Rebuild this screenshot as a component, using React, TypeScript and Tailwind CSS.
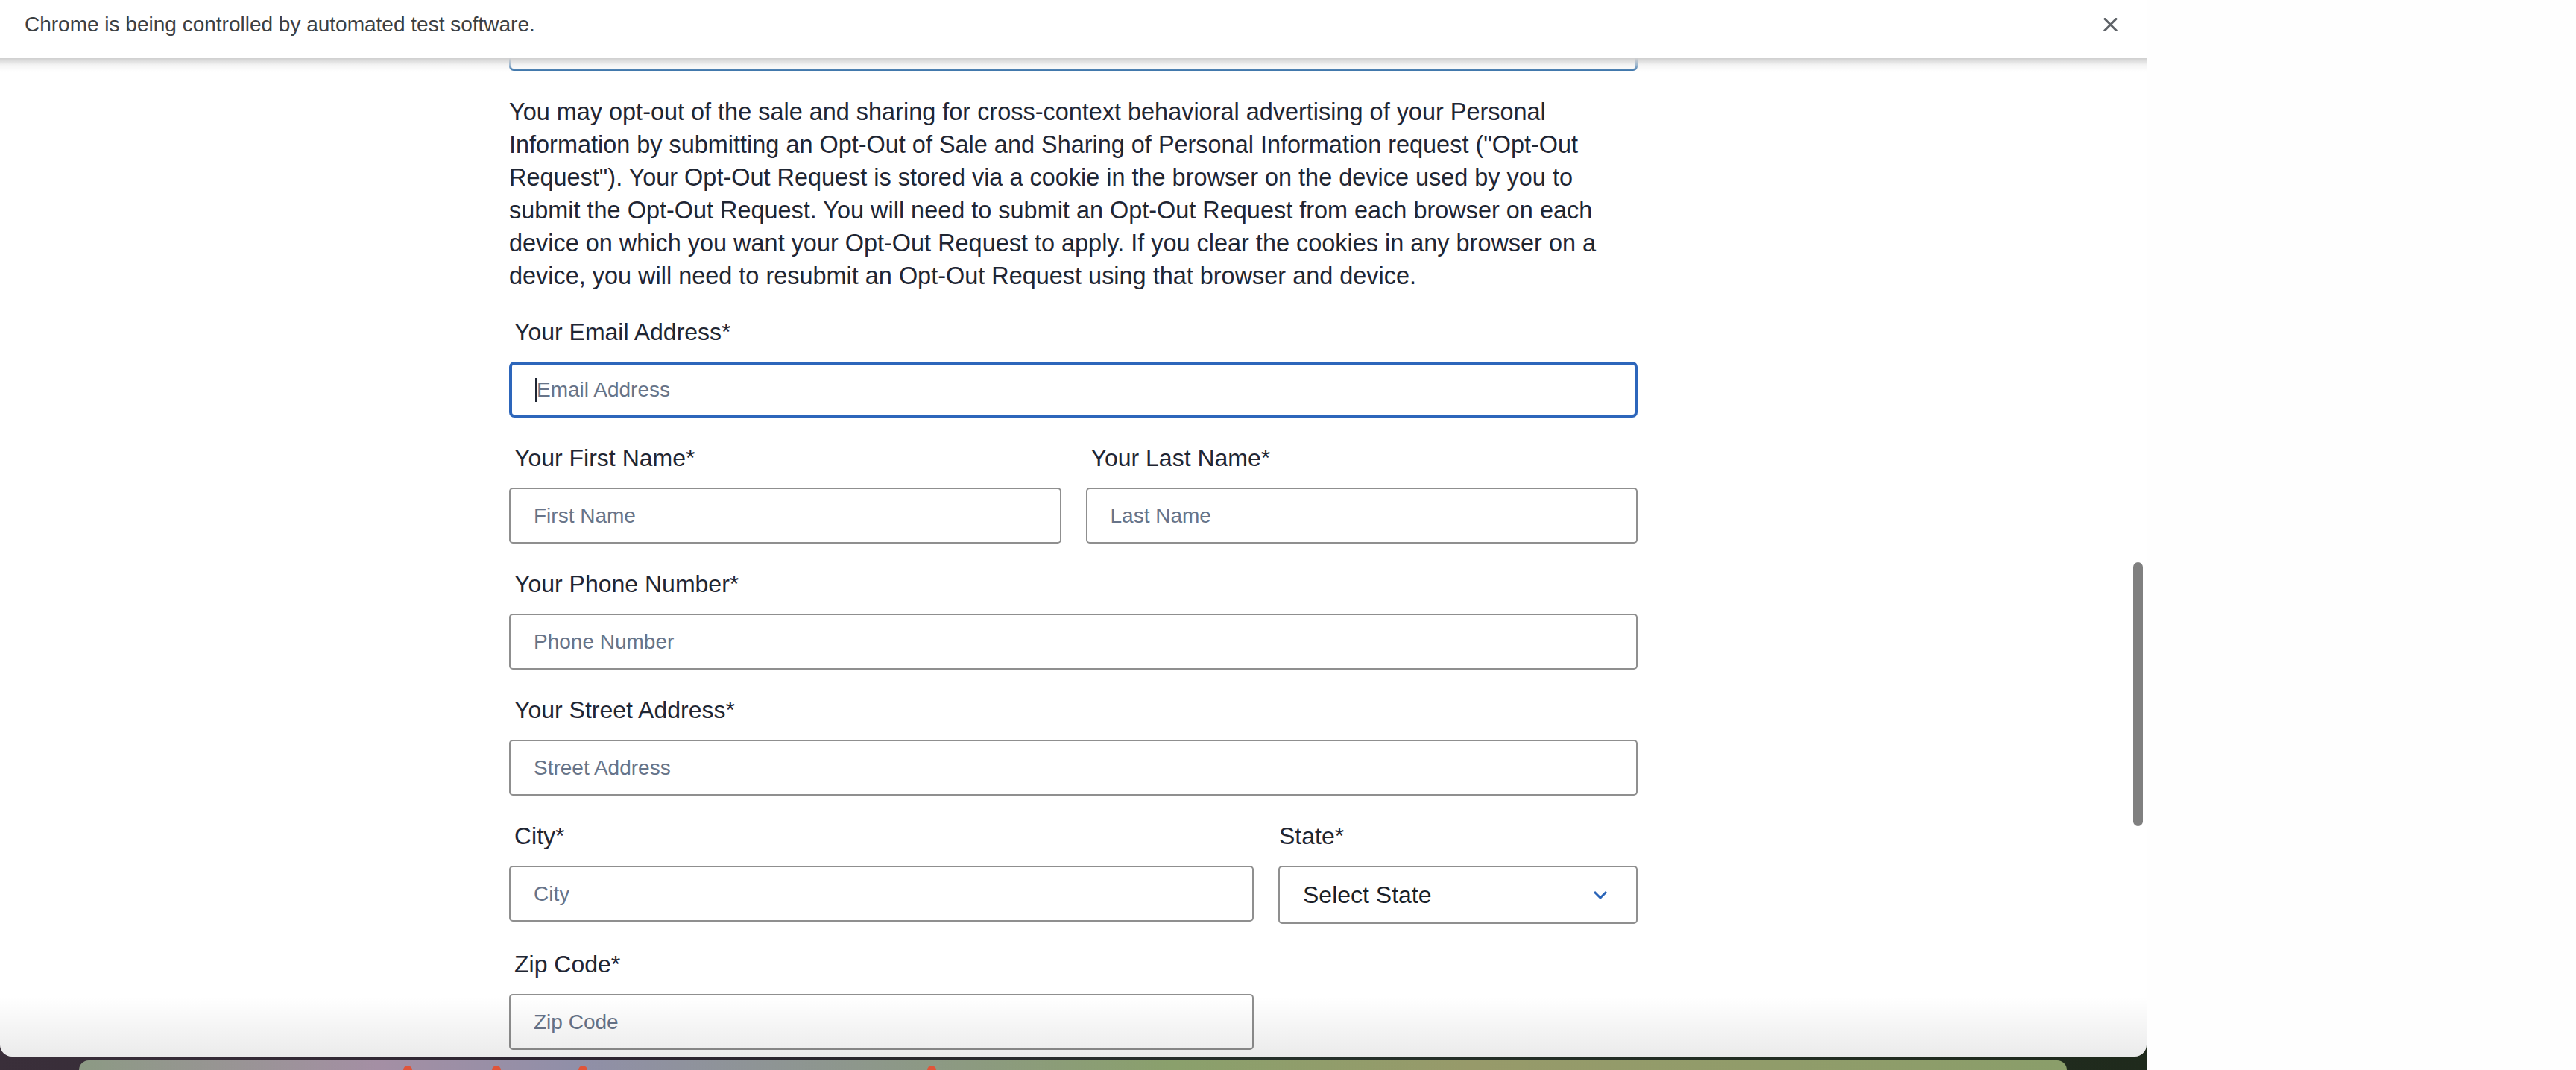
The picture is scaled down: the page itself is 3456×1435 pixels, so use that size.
import type { ReactNode } from 'react'

const font = "font-['Liberation_Sans',Arial,Helvetica,sans-serif]"

function Label({ children, className = 'pl-[7px]' }: { children: ReactNode; className?: string }) {
  return <label className={`block text-[32px] leading-[44px] text-[#1f2633] ${className}`}>{children}</label>
}

function TextInput({ placeholder }: { placeholder: string }) {
  return (
    <input
      readOnly
      placeholder={placeholder}
      className="mt-[18px] block h-[75px] w-full rounded-[5px] border-2 border-[#8f8f8f] bg-white pl-[31px] text-[28px] text-[#1f2633] outline-none placeholder:text-[#677489]"
    />
  )
}

function Field({ label, placeholder }: { label: string; placeholder: string }) {
  return (
    <div>
      <Label>{label}</Label>
      <TextInput placeholder={placeholder} />
    </div>
  )
}

function DockDot({ left }: { left: string }) {
  return <span className={`absolute top-[7px] h-[12px] w-[12px] rounded-full bg-[#e0553a] ${left}`} />
}

export default function App() {
  return (
    <div className={`flex h-[1435px] w-[3456px] overflow-hidden bg-[#fefefe] ${font}`}>
      {/* browser window + desktop strip */}
      <div className="flex w-[2880px] shrink-0 flex-col bg-[linear-gradient(90deg,#3a2f3a_0%,#2c2430_30%,#26302a_60%,#1f2a1c_100%)]">
        <div className="relative flex h-[1417px] flex-col overflow-hidden rounded-b-[16px] bg-white">
          {/* automation info bar */}
          <div className="relative z-20 flex h-[78px] shrink-0 items-center justify-between bg-white pb-[12px] pl-[33px] pr-[39px]">
            <span className="text-[28px] text-[#3c4043]">Chrome is being controlled by automated test software.</span>
            <svg width="19" height="18" viewBox="0 0 19 18" className="text-[#5f6368]">
              <path d="M2 1.5 L17 16.5 M17 1.5 L2 16.5" stroke="currentColor" strokeWidth="3" strokeLinecap="square" />
            </svg>
          </div>
          <div className="pointer-events-none absolute left-0 right-0 top-[78px] z-20 h-[18px] bg-gradient-to-b from-[#cfcfcf] via-[#ececec]/60 to-transparent" />

          {/* page viewport */}
          <div className="relative flex-1 overflow-hidden">
            <div className="ml-[683px] w-[1514px]">
              <div className="-mt-[23px] h-[40px] rounded-[6px] border-[3px] border-[#2f6ca5]" />

              <p className="mt-[33px] text-[32.45px] leading-[44px] text-[#1f2633]">
                You may opt-out of the sale and sharing for cross-context behavioral advertising of your Personal
                Information by submitting an Opt-Out of Sale and Sharing of Personal Information request ("Opt-Out
                Request"). Your Opt-Out Request is stored via a cookie in the browser on the device used by you to
                submit the Opt-Out Request. You will need to submit an Opt-Out Request from each browser on each
                device on which you want your Opt-Out Request to apply. If you clear the cookies in any browser on a
                device, you will need to resubmit an Opt-Out Request using that browser and device.
              </p>

              <form className="mt-[31px] flex flex-col gap-[32px]">
                <div>
                  <Label>Your Email Address*</Label>
                  <div className="mt-[18px] flex h-[75px] items-center rounded-[7px] border-4 border-[#2d66bb] pl-[31px]">
                    <span className="h-[32px] w-[2px] bg-[#1f2633]" />
                    <span className="text-[28px] text-[#677489]">Email Address</span>
                  </div>
                </div>

                <div className="grid grid-cols-2 gap-[33px]">
                  <Field label="Your First Name*" placeholder="First Name" />
                  <Field label="Your Last Name*" placeholder="Last Name" />
                </div>

                <Field label="Your Phone Number*" placeholder="Phone Number" />
                <Field label="Your Street Address*" placeholder="Street Address" />

                <div className="grid grid-cols-[999px_482px] items-start gap-[33px]">
                  <Field label="City*" placeholder="City" />
                  <div>
                    <Label className="pl-[1px]">State*</Label>
                    <div className="mt-[18px] flex h-[78px] items-center justify-between rounded-[5px] border-2 border-[#8f8f8f] pl-[31px] pr-[38px]">
                      <span className="text-[32px] text-[#1a1f29]">Select State</span>
                      <svg width="20" height="12" viewBox="0 0 20 12" className="text-[#2a64b8]">
                        <path d="M2 2 L10 10 L18 2" fill="none" stroke="currentColor" strokeWidth="3" />
                      </svg>
                    </div>
                  </div>
                </div>

                <div className="w-[999px]">
                  <Field label="Zip Code*" placeholder="Zip Code" />
                </div>
              </form>
            </div>

            {/* scrollbar thumb */}
            <div className="absolute right-[5px] top-[676px] h-[354px] w-[13px] rounded-full bg-[#808080]" />

            {/* bottom fade */}
            <div className="pointer-events-none absolute bottom-0 left-0 right-0 h-[80px] bg-gradient-to-b from-transparent to-[#000]/[0.08]" />
          </div>
        </div>

        {/* desktop / dock peeking below the window */}
        <div className="relative h-[18px] pl-[106px] pr-[107px] pt-[5px]">
          <div className="relative h-full rounded-t-[20px] bg-[linear-gradient(90deg,#8c9a84_0%,#a48fa4_15%,#908fa8_25%,#8aa06c_55%,#979a6a_70%,#8a9e6a_100%)]">
            <DockDot left="left-[435px]" />
            <DockDot left="left-[554px]" />
            <DockDot left="left-[670px]" />
            <DockDot left="left-[1138px]" />
          </div>
        </div>
      </div>
    </div>
  )
}
